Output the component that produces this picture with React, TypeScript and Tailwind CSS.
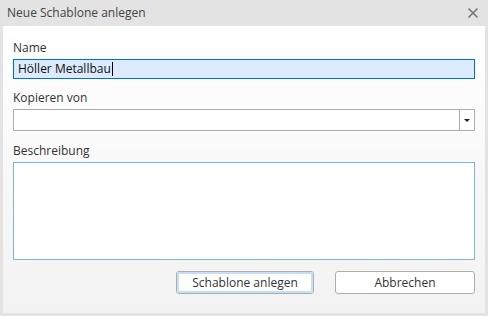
import { X } from 'lucide-react';

function Label({ children }: { children: string }) {
  return <div className="h-4 text-[12px] leading-[10px] text-[#333]">{children}</div>;
}

export default function App() {
  return (
    <div
      className="flex h-[316px] w-[488px] flex-col bg-[#e3e3e3] text-[#333]"
      style={{ fontFamily: '"Segoe UI", "Open Sans", sans-serif' }}
    >
      <div className="flex h-[26px] shrink-0 items-center justify-between pl-[7px] pr-[7px]">
        <span className="text-[12px] text-[#444]">Neue Schablone anlegen</span>
        <X className="size-4 text-[#777]" strokeWidth={2.5} />
      </div>
      <div className="mx-[3px] mb-[3px] flex flex-1 flex-col bg-gradient-to-b from-[#ffffff] to-[#f2f2f2] px-[10px] pt-[17px]">
        <Label>Name</Label>
        <div className="flex h-5 items-center border border-[#0072c6] bg-[#dbeafc] pl-[4px] text-[12px] text-[#111]">
          Höller Metallbau
          <span className="ml-px h-[14px] w-px bg-black" />
        </div>

        <div className="mt-[14px]">
          <Label>Kopieren von</Label>
        </div>
        <div className="flex h-[22px] border border-[#adadad] bg-white">
          <div className="flex-1" />
          <div className="flex w-[15px] items-center justify-center border-l border-[#adadad]">
            <div className="h-0 w-0 border-x-[3px] border-t-[3px] border-x-transparent border-t-[#222]" />
          </div>
        </div>

        <div className="mt-[15px]">
          <Label>Beschreibung</Label>
        </div>
        <textarea className="h-[98px] resize-none border border-[#7eb4ea] bg-white outline-none" />

        <div className="mt-[11px] flex justify-end gap-[21px]">
          <button className="h-[23px] w-[138px] rounded-[3px] border border-[#adadad] bg-white p-0">
            <div className="flex h-full items-center justify-center rounded-[2px] border-2 border-[#c4e1f8] text-[12px] text-[#333]">
              Schablone anlegen
            </div>
          </button>
          <button className="h-[23px] w-[140px] rounded-[3px] border border-[#adadad] bg-white text-[12px] text-[#333]">
            Abbrechen
          </button>
        </div>
      </div>
    </div>
  );
}
